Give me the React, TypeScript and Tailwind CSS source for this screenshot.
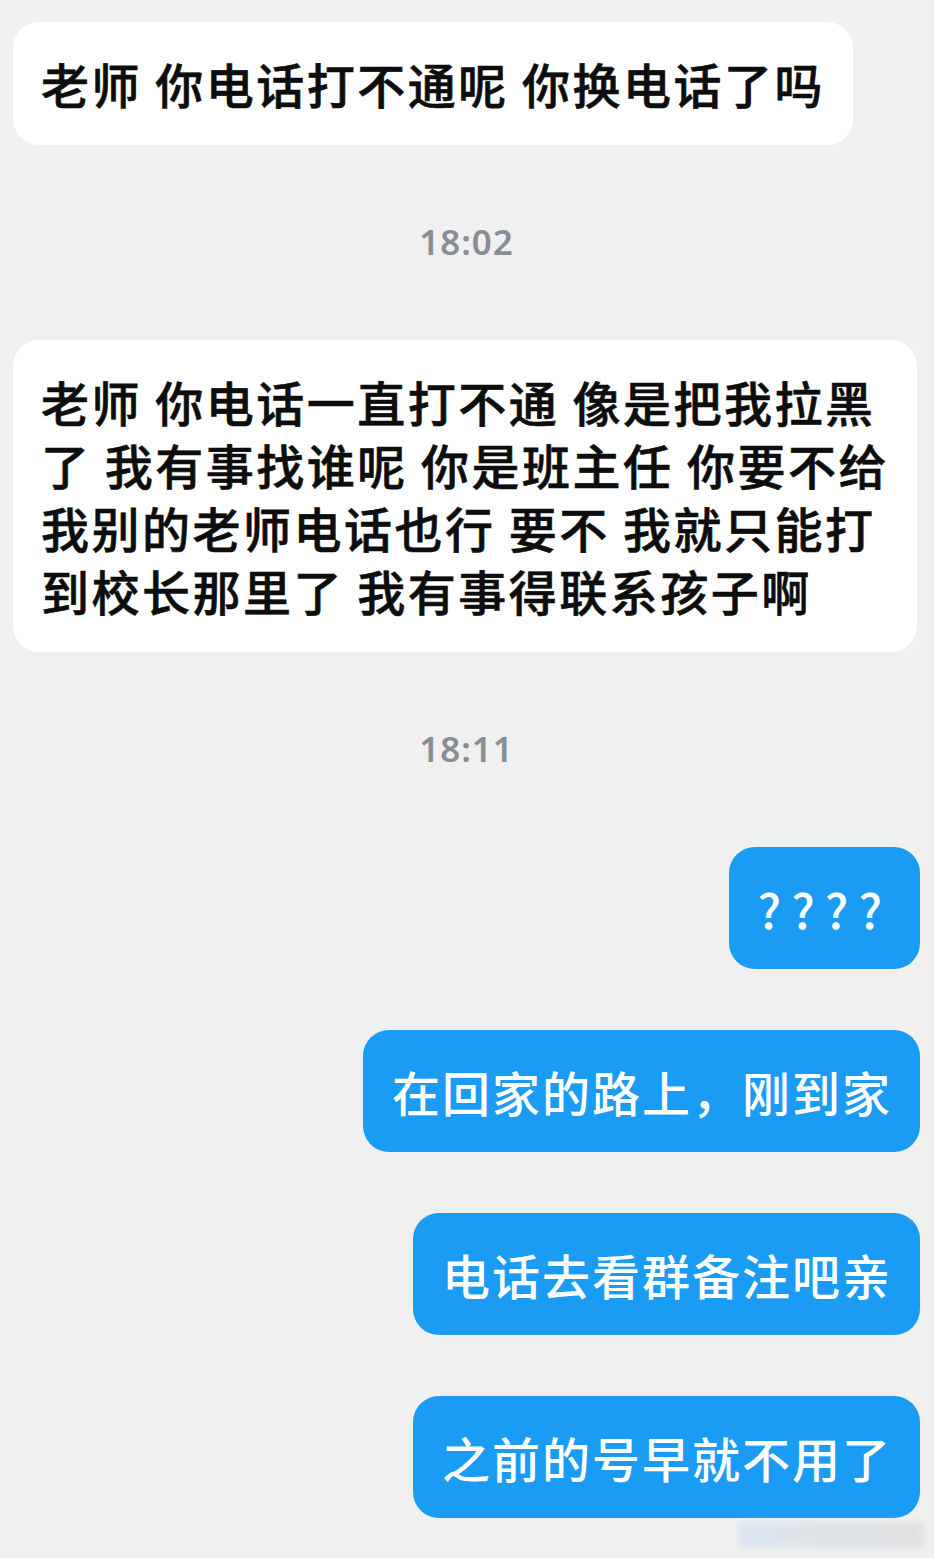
const cjk = "font-['Noto_Sans_CJK_SC','Noto_Sans',sans-serif]";

type IncomingProps = { lines: string[] };

function Incoming({ lines }: IncomingProps) {
  return (
    <div className="flex justify-start">
      <div className="rounded-[26px] bg-white py-[30px] pl-[28px] pr-[28px] text-[48px] font-medium leading-[63px] tracking-[2.5px] text-[#0d0d0d] [-webkit-text-stroke:0.6px_#0d0d0d]">
        {lines.map((line, i) => (
          <div key={i} className="whitespace-pre">
            {line}
          </div>
        ))}
      </div>
    </div>
  );
}

function Outgoing({ text, wide }: { text: string; wide?: boolean }) {
  return (
    <div className="flex justify-end">
      <div
        className={
          "rounded-[26px] bg-[#1a9cf5] py-[30px] pl-[29px] pr-[28px] text-[48px] font-medium leading-[62px] text-white " +
          (wide ? "tracking-[10px]" : "tracking-[2px]")
        }
      >
        <span className="whitespace-pre">{text}</span>
      </div>
    </div>
  );
}

function TimeStamp({ time }: { time: string }) {
  return (
    <div className="flex h-[195px] items-center justify-center">
      <span className="font-['Noto_Sans',sans-serif] text-[35px] font-semibold tracking-[1px] text-[#898d94]">
        {time}
      </span>
    </div>
  );
}

export default function App() {
  return (
    <div className={`${cjk} relative min-h-screen bg-[#f0f0f0] pt-[22px] pl-[13px] pr-[14px]`}>
      <Incoming lines={["老师 你电话打不通呢 你换电话了吗"]} />
      <TimeStamp time="18:02" />
      <Incoming
        lines={[
          "老师 你电话一直打不通 像是把我拉黑",
          "了 我有事找谁呢 你是班主任 你要不给",
          "我别的老师电话也行 要不 我就只能打",
          "到校长那里了 我有事得联系孩子啊",
        ]}
      />
      <TimeStamp time="18:11" />
      <div className="flex flex-col gap-[61px]">
        <Outgoing text="????" wide />
        <Outgoing text="在回家的路上，刚到家" />
        <Outgoing text="电话去看群备注吧亲" />
        <Outgoing text="之前的号早就不用了" />
      </div>
      {/* blurred watermark */}
      <div className="absolute bottom-[10px] right-[10px] h-[26px] w-[185px] bg-gradient-to-r from-[#d6e4f1] to-[#dcdcdc] opacity-80 blur-[3px]" />
    </div>
  );
}
